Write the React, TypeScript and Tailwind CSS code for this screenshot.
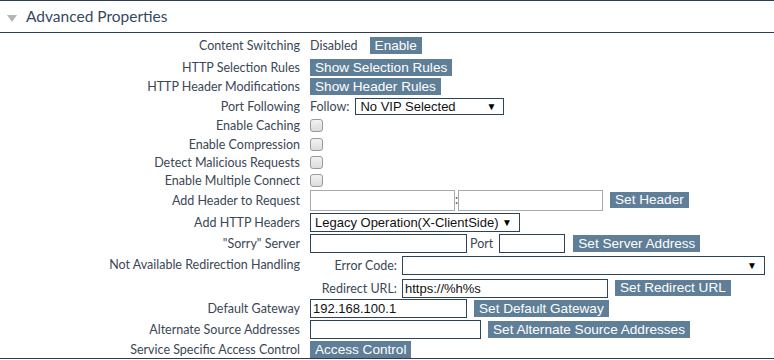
import type { ReactNode } from 'react';

const label = "font-['Lato',sans-serif] text-[12.5px] text-[#3b4756] whitespace-nowrap";
const btn =
  "bg-[#5f7e97] text-white font-['Liberation_Sans',Arial,sans-serif] text-[13.6px] leading-[17px] h-[17px] px-[5px] whitespace-nowrap";
const box = "border border-[#2d4359] bg-white h-[19px] font-['Liberation_Sans',Arial,sans-serif] text-[13px] text-[#111] leading-[17px] px-[2px] outline-none whitespace-nowrap";

function Row({ name, h, children, top }: { name: string; h: string; children?: ReactNode; top?: boolean }) {
  return (
    <div className={`flex ${top ? 'items-start' : 'items-center'} ${h}`}>
      <div className={`w-[300px] shrink-0 text-right pt-[2px] ${label}`}>{name}</div>
      <div className="pl-[10px] flex items-center flex-1">{children}</div>
    </div>
  );
}

function Select({ w, text }: { w: string; text?: string }) {
  return (
    <div className={`${box} ${w} flex items-center justify-between !pl-[4px] pr-[7px]`}>
      <span>{text}</span>
      <span className="text-[10px] text-black">▼</span>
    </div>
  );
}

function Check() {
  return <div className="w-[13px] h-[13px] rounded-[3px] border border-[#9a9a9a] bg-gradient-to-b from-[#f2f2f2] to-[#dcdcdc]" />;
}

export default function App() {
  return (
    <div className="w-[774px] h-[360px] bg-white">
      <div className="border-t border-b border-[#2c3e50] h-[33px] flex items-center">
        <svg width="10" height="7" viewBox="0 0 10 7" className="ml-[7px] mt-[3px]">
          <polygon points="0,0 10,0 5,7" fill="#b5b5b5" />
        </svg>
        <span className="ml-[9px] font-['Lato',sans-serif] text-[15.5px] text-[#34495e]">Advanced Properties</span>
      </div>

      <div className="border-b border-[#2c3e50]">
        <Row name="Content Switching" h="h-[24px]">
          <span className={`${label} pt-[2px]`}>Disabled</span>
          <span className={`${btn} ml-[12px]`}>Enable</span>
        </Row>
        <Row name="HTTP Selection Rules" h="h-[20px]">
          <span className={btn}>Show Selection Rules</span>
        </Row>
        <Row name="HTTP Header Modifications" h="h-[19px]">
          <span className={btn}>Show Header Rules</span>
        </Row>
        <Row name="Port Following" h="h-[20px]">
          <span className={`${label} pt-[2px]`}>Follow:</span>
          <div className="ml-[6px]">
            <Select w="w-[149px] !h-[17px] !leading-[15px]" text="No VIP Selected" />
          </div>
        </Row>
        <Row name="Enable Caching" h="h-[19px]"><Check /></Row>
        <Row name="Enable Compression" h="h-[18px]"><Check /></Row>
        <Row name="Detect Malicious Requests" h="h-[18px]"><Check /></Row>
        <Row name="Enable Multiple Connect" h="h-[18px]"><Check /></Row>
        <Row name="Add Header to Request" h="h-[22px]">
          <input className="w-[145px] h-[21px] border border-[#a9a9a9] outline-none" />
          <span className={`${label} w-[3px] text-center`}>:</span>
          <input className="w-[145px] h-[21px] border border-[#a9a9a9] outline-none" />
          <span className={`${btn} ml-[7px] !h-[16px] !leading-[16px]`}>Set Header</span>
        </Row>
        <Row name="Add HTTP Headers" h="h-[22px]">
          <Select w="w-[210px]" text="Legacy Operation(X-ClientSide)" />
        </Row>
        <Row name={'"Sorry" Server'} h="h-[21px]">
          <input className={`${box} w-[157px]`} />
          <span className={`${label} mx-[3px] pt-[2px]`}>Port</span>
          <input className={`${box} w-[66px] ml-[3px]`} />
          <span className={`${btn} ml-[8px]`}>Set Server Address</span>
        </Row>
        <Row name="Not Available Redirection Handling" h="h-[44px]" top>
          <div className="flex flex-col pt-[1px] gap-[2px]">
            <div className="flex items-center">
              <span className={`${label} w-[87px] text-right mr-[5px] pt-[2px]`}>Error Code:</span>
              <Select w="w-[363px]" />
            </div>
            <div className="flex items-center">
              <span className={`${label} w-[87px] text-right mr-[5px] pt-[2px]`}>Redirect URL:</span>
              <input className={`${box} w-[206px]`} defaultValue="https://%h%s" />
              <span className={`${btn} ml-[7px] !h-[16px] !leading-[16px]`}>Set Redirect URL</span>
            </div>
          </div>
        </Row>
        <Row name="Default Gateway" h="h-[21px]">
          <input className={`${box} w-[157px]`} defaultValue="192.168.100.1" />
          <span className={`${btn} ml-[7px]`}>Set Default Gateway</span>
        </Row>
        <Row name="Alternate Source Addresses" h="h-[21px]">
          <input className={`${box} w-[171px]`} />
          <span className={`${btn} ml-[7px]`}>Set Alternate Source Addresses</span>
        </Row>
        <Row name="Service Specific Access Control" h="h-[18px]">
          <span className={`${btn} self-end`}>Access Control</span>
        </Row>
      </div>
    </div>
  );
}
